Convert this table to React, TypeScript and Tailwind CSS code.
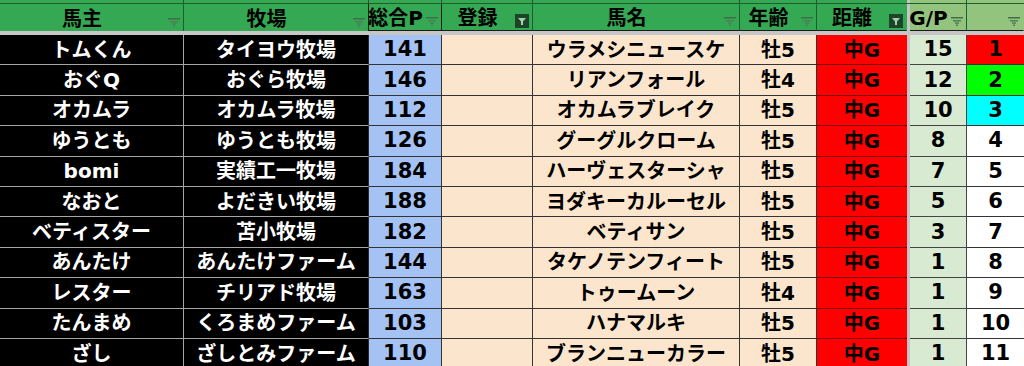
import React from "react";

const GRID =
  "grid grid-cols-[184px_185px_73px_91px_207px_77px_90px_3px_57px_57px]";

const FONT = {
  fontFamily: '"DejaVu Sans","Noto Sans CJK JP",sans-serif',
};

type Row = {
  owner: string;
  farm: string;
  total: number;
  horse: string;
  age: string;
  gp: number;
  rank: number;
};

const rows: Row[] = [
  { owner: "トムくん", farm: "タイヨウ牧場", total: 141, horse: "ウラメシニュースケ", age: "牡5", gp: 15, rank: 1 },
  { owner: "おぐQ", farm: "おぐら牧場", total: 146, horse: "リアンフォール", age: "牡4", gp: 12, rank: 2 },
  { owner: "オカムラ", farm: "オカムラ牧場", total: 112, horse: "オカムラブレイク", age: "牡5", gp: 10, rank: 3 },
  { owner: "ゆうとも", farm: "ゆうとも牧場", total: 126, horse: "グーグルクローム", age: "牡5", gp: 8, rank: 4 },
  { owner: "bomi", farm: "実績工一牧場", total: 184, horse: "ハーヴェスターシャ", age: "牡5", gp: 7, rank: 5 },
  { owner: "なおと", farm: "よだきい牧場", total: 188, horse: "ヨダキーカルーセル", age: "牡5", gp: 5, rank: 6 },
  { owner: "ベティスター", farm: "苫小牧場", total: 182, horse: "ベティサン", age: "牡5", gp: 3, rank: 7 },
  { owner: "あんたけ", farm: "あんたけファーム", total: 144, horse: "タケノテンフィート", age: "牡5", gp: 1, rank: 8 },
  { owner: "レスター", farm: "チリアド牧場", total: 163, horse: "トゥームーン", age: "牡4", gp: 1, rank: 9 },
  { owner: "たんまめ", farm: "くろまめファーム", total: 103, horse: "ハナマルキ", age: "牡5", gp: 1, rank: 10 },
  { owner: "ざし", farm: "ざしとみファーム", total: 110, horse: "ブランニューカラー", age: "牡5", gp: 1, rank: 11 },
];

function Funnel() {
  return (
    <svg
      width="12"
      height="9"
      viewBox="0 0 12 9"
      className="absolute right-[3px] bottom-[4px]"
    >
      <rect x="0" y="0" width="12" height="1.5" fill="#3f6e49" />
      <rect x="2" y="3" width="8" height="1.5" fill="#4d8058" />
      <rect x="4" y="5.3" width="4" height="1.5" fill="#4d8058" />
      <rect x="5" y="7.5" width="2" height="1.5" fill="#4d8058" />
    </svg>
  );
}

function FilledFunnel() {
  return (
    <svg
      width="14"
      height="14"
      viewBox="0 0 14 14"
      className="absolute right-[3px] bottom-[2px]"
    >
      <rect x="0" y="0" width="14" height="14" fill="#1c4427" />
      <polygon points="3,4 11,4 8,7.5 8,11 6,11 6,7.5" fill="#a9cdb1" />
    </svg>
  );
}

function HeaderCell({
  label,
  light,
  filled,
  border = "border-r-[#1d5e2f]",
  bottom = "",
}: {
  label: string;
  light?: boolean;
  filled?: boolean;
  border?: string;
  bottom?: string;
}) {
  return (
    <div
      className={`relative flex items-center justify-center pt-[2px] pr-[19px] whitespace-nowrap border-r ${border} ${bottom} ${
        light ? "bg-[#93c47d]" : "bg-[#34a853]"
      }`}
    >
      <span className="text-[20px] font-bold text-black leading-none">{label}</span>
      {filled ? <FilledFunnel /> : <Funnel />}
    </div>
  );
}

export default function App() {
  return (
    <div className="w-[1024px] h-[366px] overflow-hidden bg-white" style={FONT}>
      {/* sliver of row above header */}
      <div className={`${GRID} h-[3px]`}>
        <div className="bg-[#34a853] border-r border-r-[#1d5e2f]" />
        <div className="bg-[#34a853] border-r border-r-[#1d5e2f]" />
        <div className="bg-[#34a853] border-r border-r-[#1d5e2f]" />
        <div className="bg-[#34a853] border-r border-r-[#1d5e2f]" />
        <div className="bg-[#34a853] border-r border-r-[#1d5e2f]" />
        <div className="bg-[#34a853] border-r border-r-[#1d5e2f]" />
        <div className="bg-[#34a853]" />
        <div className="bg-[#c6c6c6]" />
        <div className="bg-[#93c47d] border-r border-r-[#1d5e2f]" />
        <div className="bg-[#93c47d]" />
      </div>
      {/* header */}
      <div className={`${GRID} h-[28px] border-t border-t-[#1d5e2f]`}>
        <HeaderCell label="馬主" />
        <HeaderCell label="牧場" border="border-r-[#1a1a1a]" />
        <HeaderCell label="総合P" border="border-r-[#1a1a1a]" bottom="border-b border-b-[#1a1a1a]" />
        <HeaderCell label="登録" filled bottom="border-b border-b-[#1a1a1a]" />
        <HeaderCell label="馬名" bottom="border-b border-b-[#1a1a1a]" />
        <HeaderCell label="年齢" bottom="border-b border-b-[#1a1a1a]" />
        <HeaderCell label="距離" filled border="border-r-transparent" bottom="border-b border-b-[#1a1a1a]" />
        <div className="bg-[#c6c6c6]" />
        <HeaderCell label="G/P" light bottom="border-b border-b-[#1a1a1a]" />
        <HeaderCell label="" light border="border-r-transparent" bottom="border-b border-b-[#1a1a1a]" />
      </div>
      {/* freeze band */}
      <div className="h-[4px] bg-[#c6c6c6]" />
      {/* body */}
      {rows.map((r) => {
        const rankBg =
          r.rank === 1
            ? "bg-[#ff0000]"
            : r.rank === 2
            ? "bg-[#00ff00]"
            : r.rank === 3
            ? "bg-[#00ffff]"
            : "bg-white";
        return (
          <div key={r.rank} className={`${GRID} h-[30.4px] text-[20px] font-bold leading-none`}>
            <div className="flex items-center justify-center bg-black text-white border-r border-b border-[#a6a6a6] whitespace-nowrap">
              {r.owner}
            </div>
            <div className="flex items-center justify-center bg-black text-white border-b border-b-[#a6a6a6] border-r border-r-[#2a2a2a] whitespace-nowrap">
              {r.farm}
            </div>
            <div className="flex items-center justify-center bg-[#a4c2f4] text-black text-[21px] border-r border-b border-[#333333]">
              {r.total}
            </div>
            <div className="bg-[#fce5cd] border-r border-b border-[#333333]" />
            <div className="flex items-center justify-center bg-[#fce5cd] text-black border-r border-b border-[#333333] whitespace-nowrap">
              {r.horse}
            </div>
            <div className="flex items-center justify-center bg-[#fce5cd] text-black border-r border-b border-[#333333]">
              {r.age}
            </div>
            <div className="flex items-center justify-center bg-[#ff0000] text-black border-b border-[#7a0000]">
              中G
            </div>
            <div className="bg-[#c6c6c6]" />
            <div className="flex items-center justify-center bg-[#d9ead3] text-black text-[21px] border-r border-b border-[#444444]">
              {r.gp}
            </div>
            <div className={`flex items-center justify-center ${rankBg} text-black text-[21px] border-b border-[#333333]`}>
              {r.rank}
            </div>
          </div>
        );
      })}
    </div>
  );
}
